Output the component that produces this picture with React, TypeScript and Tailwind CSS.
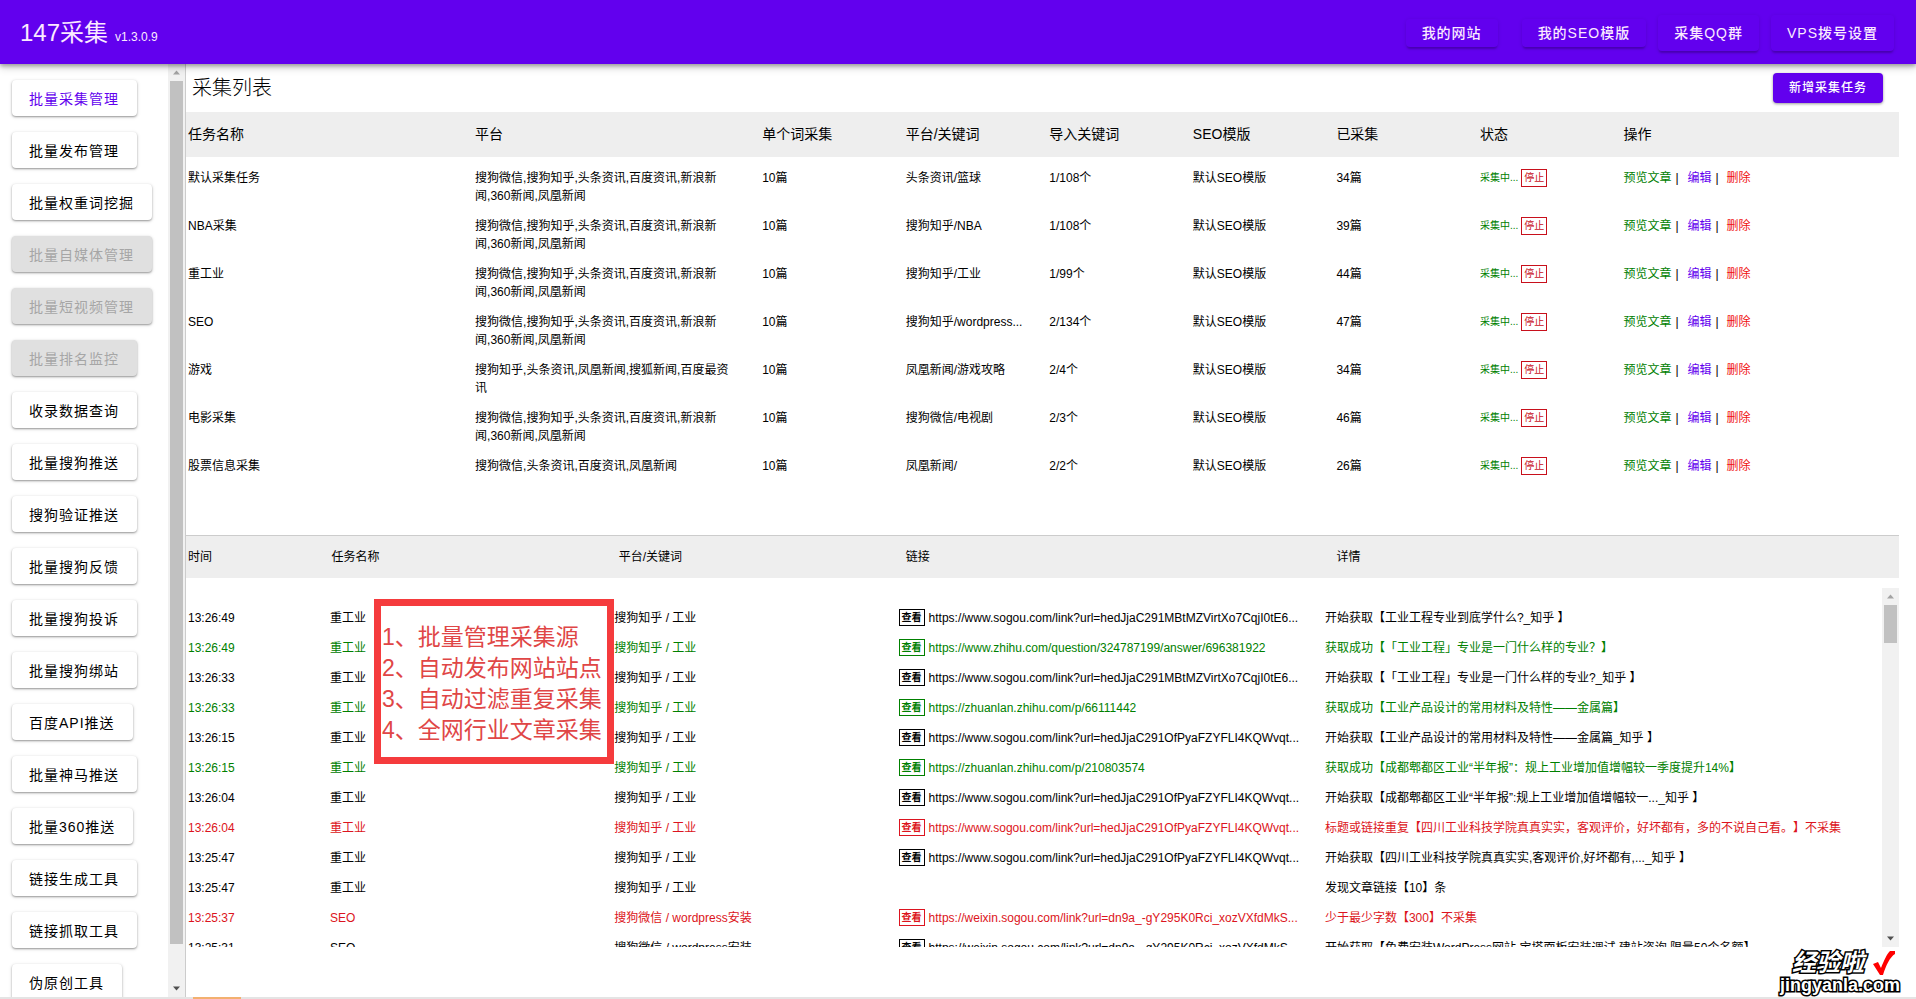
import clsx from 'clsx';

type Tone = 'normal' | 'success' | 'error';

const navItems = [
  { label: '批量采集管理', state: 'active' },
  { label: '批量发布管理' },
  { label: '批量权重词挖掘' },
  { label: '批量自媒体管理', state: 'disabled' },
  { label: '批量短视频管理', state: 'disabled' },
  { label: '批量排名监控', state: 'disabled' },
  { label: '收录数据查询' },
  { label: '批量搜狗推送' },
  { label: '搜狗验证推送' },
  { label: '批量搜狗反馈' },
  { label: '批量搜狗投诉' },
  { label: '批量搜狗绑站' },
  { label: '百度API推送' },
  { label: '批量神马推送' },
  { label: '批量360推送' },
  { label: '链接生成工具' },
  { label: '链接抓取工具' },
  { label: '伪原创工具' }
];

const allPlatforms = '搜狗微信,搜狗知乎,头条资讯,百度资讯,新浪新闻,360新闻,凤凰新闻';

const tasks = [
  { name: '默认采集任务', platforms: allPlatforms, keyword: '头条资讯/篮球', imported: '1/108个', collected: 34 },
  { name: 'NBA采集', platforms: allPlatforms, keyword: '搜狗知乎/NBA', imported: '1/108个', collected: 39 },
  { name: '重工业', platforms: allPlatforms, keyword: '搜狗知乎/工业', imported: '1/99个', collected: 44 },
  { name: 'SEO', platforms: allPlatforms, keyword: '搜狗知乎/wordpress...', imported: '2/134个', collected: 47 },
  {
    name: '游戏',
    platforms: '搜狗知乎,头条资讯,凤凰新闻,搜狐新闻,百度最资讯',
    keyword: '凤凰新闻/游戏攻略',
    imported: '2/4个',
    collected: 34
  },
  { name: '电影采集', platforms: allPlatforms, keyword: '搜狗微信/电视剧', imported: '2/3个', collected: 46 },
  { name: '股票信息采集', platforms: '搜狗微信,头条资讯,百度资讯,凤凰新闻', keyword: '凤凰新闻/', imported: '2/2个', collected: 26 }
];

const urlA = 'https://www.sogou.com/link?url=hedJjaC291MBtMZVirtXo7CqjI0tE6...';
const urlB = 'https://www.sogou.com/link?url=hedJjaC291OfPyaFZYFLI4KQWvqt...';
const urlC = 'https://weixin.sogou.com/link?url=dn9a_-gY295K0Rci_xozVXfdMkS...';

const logs: { time: string; task: string; source: string; url?: string; detail: string; tone: Tone }[] = [
  { time: '13:26:49', task: '重工业', source: '搜狗知乎 / 工业', url: urlA, detail: '开始获取【工业工程专业到底学什么?_知乎 】', tone: 'normal' },
  {
    time: '13:26:49',
    task: '重工业',
    source: '搜狗知乎 / 工业',
    url: 'https://www.zhihu.com/question/324787199/answer/696381922',
    detail: '获取成功【「工业工程」专业是一门什么样的专业？】',
    tone: 'success'
  },
  { time: '13:26:33', task: '重工业', source: '搜狗知乎 / 工业', url: urlA, detail: '开始获取【「工业工程」专业是一门什么样的专业?_知乎 】', tone: 'normal' },
  {
    time: '13:26:33',
    task: '重工业',
    source: '搜狗知乎 / 工业',
    url: 'https://zhuanlan.zhihu.com/p/66111442',
    detail: '获取成功【工业产品设计的常用材料及特性——金属篇】',
    tone: 'success'
  },
  { time: '13:26:15', task: '重工业', source: '搜狗知乎 / 工业', url: urlB, detail: '开始获取【工业产品设计的常用材料及特性——金属篇_知乎 】', tone: 'normal' },
  {
    time: '13:26:15',
    task: '重工业',
    source: '搜狗知乎 / 工业',
    url: 'https://zhuanlan.zhihu.com/p/210803574',
    detail: '获取成功【成都郫都区工业“半年报”：规上工业增加值增幅较一季度提升14%】',
    tone: 'success'
  },
  { time: '13:26:04', task: '重工业', source: '搜狗知乎 / 工业', url: urlB, detail: '开始获取【成都郫都区工业“半年报”:规上工业增加值增幅较一..._知乎 】', tone: 'normal' },
  {
    time: '13:26:04',
    task: '重工业',
    source: '搜狗知乎 / 工业',
    url: urlB,
    detail: '标题或链接重复【四川工业科技学院真真实实，客观评价，好坏都有，多的不说自己看。】不采集',
    tone: 'error'
  },
  { time: '13:25:47', task: '重工业', source: '搜狗知乎 / 工业', url: urlB, detail: '开始获取【四川工业科技学院真真实实,客观评价,好坏都有,..._知乎 】', tone: 'normal' },
  { time: '13:25:47', task: '重工业', source: '搜狗知乎 / 工业', detail: '发现文章链接【10】条', tone: 'normal' },
  { time: '13:25:37', task: 'SEO', source: '搜狗微信 / wordpress安装', url: urlC, detail: '少于最少字数【300】不采集', tone: 'error' },
  {
    time: '13:25:31',
    task: 'SEO',
    source: '搜狗微信 / wordpress安装',
    url: urlC,
    detail: '开始获取【免费安装WordPress网站,宝塔面板安装调试,建站咨询,限量50个名额】',
    tone: 'normal'
  }
];

const toneClass: Record<Tone, string> = {
  normal: 'text-black',
  success: 'text-[#008000]',
  error: 'text-[#dc1420]'
};

const notes = ['1、批量管理采集源', '2、自动发布网站站点', '3、自动过滤重复采集', '4、全网行业文章采集'];

function ScrollTrack({ thumb }: { thumb: string }) {
  return (
    <div className="flex w-[17px] shrink-0 flex-col items-center bg-[#f1f1f1]" aria-hidden="true">
      <svg className="h-[17px] w-[17px] shrink-0" viewBox="0 0 17 17">
        <path d="M5 10.5h7L8.500 6.500z" fill="#a3a3a3" />
      </svg>
      <div className="min-h-0 w-full flex-1 px-0.5">
        <div className={clsx('bg-[#c1c1c1]', thumb)} />
      </div>
      <svg className="h-[17px] w-[17px] shrink-0" viewBox="0 0 17 17">
        <path d="M5 6.500h7L8.500 10.500z" fill="#505050" />
      </svg>
    </div>
  );
}

function Header() {
  const button = 'rounded px-4 text-sm font-medium tracking-[1px] text-[#fbeaff] shadow-[0_3px_2px_-1px_rgba(0,0,0,0.2),0_1px_4px_rgba(0,0,0,0.12)]';
  return (
    <header className="z-10 flex h-16 shrink-0 items-center bg-[#6200ee] pt-px pr-[22px] pl-5 text-[#fbeaff] shadow-[0_2px_4px_rgba(0,0,0,0.3),0_4px_8px_rgba(0,0,0,0.16)]">
      <h1 className="flex items-baseline gap-[7px] text-2xl">
        147采集
        <span className="text-xs font-medium">v1.3.0.9</span>
      </h1>
      <nav className="ml-auto flex items-center gap-3">
        <button className={clsx(button, 'mr-3 h-7')}>我的网站</button>
        <button className={clsx(button, 'h-7')}>我的SEO模版</button>
        <button className={clsx(button, 'h-9')}>采集QQ群</button>
        <button className={clsx(button, 'h-9')}>VPS拨号设置</button>
      </nav>
    </header>
  );
}

function Sidebar() {
  return (
    <aside className="flex shrink-0 border-r border-[#ccc]">
      <nav className="flex w-[168px] flex-col items-start gap-4 overflow-hidden pt-4 pl-3">
        {navItems.map((item) => (
          <button
            key={item.label}
            disabled={item.state === 'disabled'}
            className={clsx(
              'h-9 shrink-0 rounded pt-0.5 pr-[18px] pl-[17px] text-sm tracking-[1px] shadow-[0_1px_2px_rgba(0,0,0,0.35),0_1px_4px_rgba(0,0,0,0.12)]',
              item.state === 'active' && 'bg-white text-[#6200ee]',
              item.state === 'disabled' && 'bg-[#e0e0e0] text-[#a6a6a6]',
              !item.state && 'bg-white text-black'
            )}
          >
            {item.label}
          </button>
        ))}
      </nav>
      <ScrollTrack thumb="h-[96%]" />
    </aside>
  );
}

function TaskTable() {
  return (
    <table className="w-full table-fixed text-left text-xs leading-[18px]">
      <colgroup>
        <col className="w-[16.76%]" />
        <col className="w-[16.76%]" />
        <col className="w-[8.38%]" />
        <col className="w-[8.38%]" />
        <col className="w-[8.38%]" />
        <col className="w-[8.38%]" />
        <col className="w-[8.38%]" />
        <col className="w-[8.38%]" />
        <col />
      </colgroup>
      <thead>
        <tr className="h-[45px] bg-[#eee] text-sm">
          {['任务名称', '平台', '单个词采集', '平台/关键词', '导入关键词', 'SEO模版', '已采集', '状态', '操作'].map((title) => (
            <th key={title} className="pb-0.5 pl-0.5 font-normal">
              {title}
            </th>
          ))}
        </tr>
      </thead>
      <tbody>
        {tasks.map((task) => (
          <tr key={task.name} className="h-12 align-top">
            <td className="pt-3 pl-0.5">{task.name}</td>
            <td className="pt-3 pr-[30px] pl-0.5">{task.platforms}</td>
            <td className="pt-3 pl-0.5">10篇</td>
            <td className="pt-3 pl-0.5 whitespace-nowrap">{task.keyword}</td>
            <td className="pt-3 pl-0.5">{task.imported}</td>
            <td className="pt-3 pl-0.5">默认SEO模版</td>
            <td className="pt-3 pl-0.5">{task.collected}篇</td>
            <td className="pt-3 pl-0.5">
              <div className="flex items-center gap-[3px] text-[10px] text-[#008000]">
                采集中...
                <button className="h-[18px] border border-[#c8101c] px-0.5 leading-4 text-[#c8101c]">停止</button>
              </div>
            </td>
            <td className="pt-3 pl-0.5">
              <div className="flex">
                <a href="#preview" className="text-[#008000]">
                  预览文章
                </a>
                <span className="w-4 pl-1">|</span>
                <a href="#edit" className="text-[#6200ee]">
                  编辑
                </a>
                <span className="w-[15px] pl-1">|</span>
                <a href="#delete" className="text-[#f01010]">
                  删除
                </a>
              </div>
            </td>
          </tr>
        ))}
      </tbody>
    </table>
  );
}

function LogColumns() {
  return (
    <colgroup>
      <col className="w-[8.38%]" />
      <col className="w-[16.76%]" />
      <col className="w-[16.76%]" />
      <col className="w-[25.14%]" />
      <col />
    </colgroup>
  );
}

function LogPanel() {
  return (
    <section className="relative mt-[42px] flex min-h-0 flex-1 flex-col pb-[50px] text-xs">
      <table className="w-full table-fixed border-t border-[#ccc] text-left">
        <LogColumns />
        <thead>
          <tr className="h-[42px] bg-[#eee]">
            {['时间', '任务名称', '平台/关键词', '链接', '详情'].map((title) => (
              <th key={title} className="pl-0.5 font-normal">
                {title}
              </th>
            ))}
          </tr>
        </thead>
      </table>
      <div className="mt-2.5 flex min-h-0 flex-1">
        <div className="min-w-0 flex-1 overflow-hidden pt-[15px]">
          <table className="w-full table-fixed">
            <LogColumns />
            <tbody>
              {logs.map((log, idx) => (
                <tr key={idx} className={clsx('h-[30px] whitespace-nowrap', toneClass[log.tone])}>
                  <td className="pl-0.5">{log.time}</td>
                  <td className="pl-0.5">{log.task}</td>
                  <td className="pl-0.5">{log.source}</td>
                  <td className="pl-0.5">
                    {log.url && (
                      <div className="flex items-center gap-1">
                        <button className="h-[17px] border px-0.5 text-[10px] leading-[15px] font-bold">查看</button>
                        <a href={log.url}>{log.url}</a>
                      </div>
                    )}
                  </td>
                  <td className="pl-0.5">{log.detail}</td>
                </tr>
              ))}
            </tbody>
          </table>
        </div>
        <ScrollTrack thumb="h-[38px]" />
      </div>
      <div className="absolute top-16 left-[188px] h-[165px] w-[240px] border-[7px] border-[#f53b3d] bg-white pt-4 pl-px text-[23px] leading-[31px] whitespace-nowrap text-[#e04646]">
        {notes.map((note) => (
          <p key={note}>{note}</p>
        ))}
      </div>
    </section>
  );
}

function Watermark() {
  return (
    <div className="absolute right-4 bottom-1 flex flex-col items-end font-bold text-white">
      <div className="flex items-center gap-1 pr-1">
        <span className="pr-1 text-2xl leading-6 italic [-webkit-text-stroke:3px_black] [paint-order:stroke_fill]">经验啦</span>
        <svg className="h-6 w-6" viewBox="0 0 24 24">
          <path d="M1 13l5-2 3 6C12 9 15 3 18 0h5v3C18 6 14 14 11 24H8z" fill="#f00" />
        </svg>
      </div>
      <span className="text-lg leading-5 [-webkit-text-stroke:3px_black] [paint-order:stroke_fill]">jingyanla.com</span>
    </div>
  );
}

export default function App() {
  return (
    <div className="relative flex h-screen flex-col overflow-hidden bg-white font-['Liberation_Sans','Noto_Sans_CJK_SC',sans-serif] text-black [text-spacing-trim:space-all]">
      <Header />
      <div className="flex min-h-0 flex-1">
        <Sidebar />
        <main className="flex min-w-0 flex-1 flex-col pr-[17px]">
          <div className="flex h-12 shrink-0 items-center justify-between pr-4 pl-1.5">
            <h2 className="text-xl font-light">采集列表</h2>
            <button className="h-[30px] rounded bg-[#6200ee] px-4 text-xs font-medium tracking-[1px] text-white shadow-[0_1px_3px_rgba(0,0,0,0.4)]">
              新增采集任务
            </button>
          </div>
          <TaskTable />
          <LogPanel />
        </main>
      </div>
      <div className="h-0.5 shrink-0 bg-[#e4e4e4] pl-[193px]">
        <div className="h-full w-12 bg-[#f3b06f]" />
      </div>
      <Watermark />
    </div>
  );
}
